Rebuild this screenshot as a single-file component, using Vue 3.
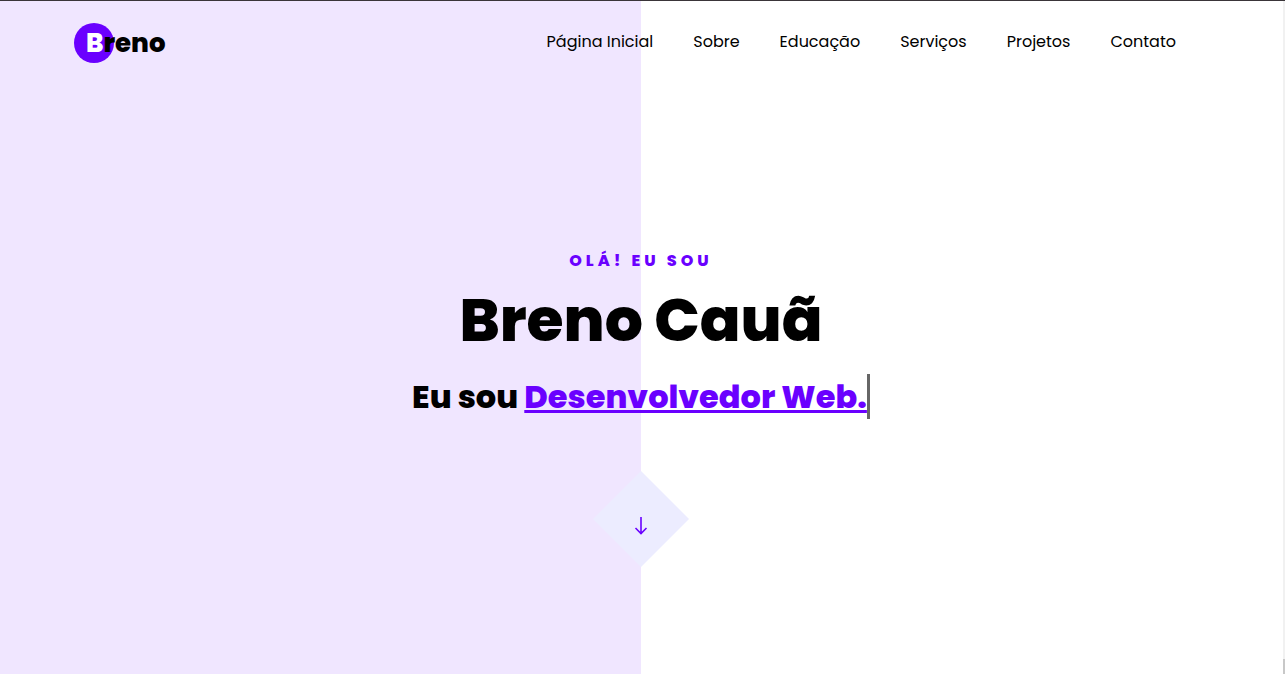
<script setup>
const links = ['Página Inicial', 'Sobre', 'Educação', 'Serviços', 'Projetos', 'Contato']
</script>

<template>
  <div class="page">
    <header class="header">
      <a href="#" class="logo"><span class="initial">B</span>reno</a>
      <nav class="nav">
        <a v-for="l in links" :key="l" href="#">{{ l }}</a>
      </nav>
    </header>
    <main class="hero">
      <p class="hello">OLÁ! EU SOU</p>
      <h1>Breno Cauã</h1>
      <h2>Eu sou <span class="role">Desenvolvedor Web.</span></h2>
      <a href="#sobre" class="down" aria-label="Sobre">
        <svg width="16" height="20" viewBox="0 0 16 20" fill="none" stroke="#6a00ff" stroke-width="1.6"><path d="M8 1V17.5M2.5 12L8 17.5L13.5 12" /></svg>
      </a>
    </main>
    <div class="track"><i class="thumb"></i></div>
  </div>
</template>

<style>
body { margin: 0; }
</style>

<style scoped>
.page {
  --split: calc((100% - 3px) / 2);
  position: relative;
  box-sizing: border-box;
  min-height: 100vh;
  padding-right: 3px;
  border-top: 1px solid #3a3539;
  background: linear-gradient(90deg, #f0e6ff var(--split), #fff var(--split));
  font-family: Poppins, Inter, "Liberation Sans", sans-serif;
  color: #000;
}
.header {
  display: flex;
  justify-content: space-between;
  padding: 22px 106px 0 74px;
}
a { color: inherit; text-decoration: none; }
.logo {
  position: relative;
  z-index: 0;
  display: flex;
  align-items: center;
  height: 40px;
  padding-left: 12px;
  font-size: 26px;
  font-weight: 800;
}
.logo::before {
  content: "";
  position: absolute;
  z-index: -1;
  left: 0;
  top: 0;
  width: 40px;
  height: 40px;
  border-radius: 50%;
  background: #6a00ff;
}
.initial { color: #fff; }
.nav {
  display: flex;
  gap: 40px;
  align-items: center;
  height: 36px;
  font-size: 16px;
}
.hero {
  display: flex;
  flex-direction: column;
  align-items: center;
  padding-top: 186px;
}
.hello {
  margin: 0;
  font-size: 16px;
  line-height: 24px;
  font-weight: 800;
  letter-spacing: 4px;
  color: #6a00ff;
}
h1 { margin: 7px 0 0; font-size: 60px; line-height: 80px; font-weight: 800; }
h2 { margin: 14px 0 0; font-size: 32px; line-height: 45px; font-weight: 800; }
.role {
  display: inline-block;
  border-right: 3px solid #666;
  color: #6a00ff;
  text-decoration: underline;
}
.down {
  display: flex;
  align-items: center;
  justify-content: center;
  box-sizing: border-box;
  width: 96px;
  height: 96px;
  margin-top: 52px;
  padding-top: 14px;
  background: #ececff;
  clip-path: polygon(50% 0, 100% 50%, 50% 100%, 0 50%);
}
.track {
  position: absolute;
  top: 0;
  right: 0;
  bottom: 0;
  display: flex;
  align-items: flex-end;
  width: 2px;
  background: #f1f1f1;
}
.thumb { width: 100%; height: 15px; background: #c8c8c8; }
</style>
